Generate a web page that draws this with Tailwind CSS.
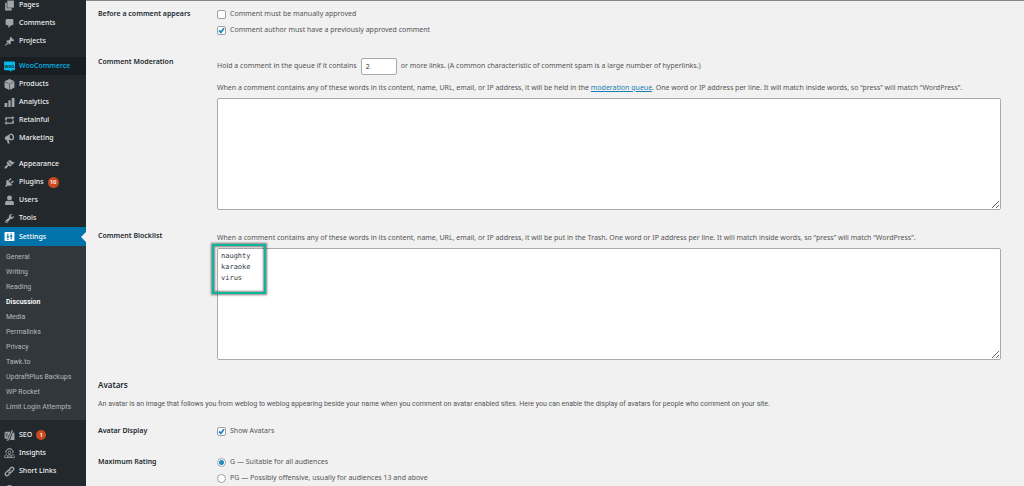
<!DOCTYPE html>
<html lang="en">
<head>
  <meta charset="UTF-8" />
  <meta name="viewport" content="width=device-width, initial-scale=1.0" />
  <title>Discussion Settings - WordPress</title>
  <script src="https://cdn.jsdelivr.net/npm/@tailwindcss/browser@4"></script>
</head>
<body class="h-screen overflow-hidden flex bg-[#f1f1f1] font-['Noto_Sans',sans-serif] text-[7px] leading-[10px] text-[#555]">

  <!-- Admin menu -->
  <nav class="w-[86px] shrink-0 h-screen overflow-hidden flex flex-col justify-start bg-[#23282d] text-[#eee] font-medium">
    <ul class="-mt-1">
      <li><a href="#" class="flex items-center h-[18px] pl-1 gap-1">
        <svg class="size-[11px] fill-[#a0a5aa]" viewBox="0 0 20 20"><path d="M6 1h12v13H6z"/><path d="M2 5h3v10h9v4H2z"/></svg>
        Pages</a></li>
      <li><a href="#" class="flex items-center h-[18px] pl-1 gap-1">
        <svg class="size-[11px] fill-[#a0a5aa]" viewBox="0 0 20 20"><path d="M5 2h10c1.100 0 2 .9 2 2v7c0 1.100-.9 2-2 2h-2l-5 5v-5H5c-1.100 0-2-.9-2-2V4c0-1.100.9-2 2-2z"/></svg>
        Comments</a></li>
      <li><a href="#" class="flex items-center h-[18px] pl-1 gap-1">
        <svg class="size-[11px] fill-[#a0a5aa]" viewBox="0 0 20 20"><path d="M10.440 3.020l1.820-1.820 6.360 6.350-1.830 1.820c-1.050-.68-2.480-.57-3.410.36l-.75.75c-.92.930-1.040 2.350-.35 3.410l-1.830 1.820-2.410-2.410-2.800 2.790c-.42.420-3.380 2.710-3.800 2.290s1.860-3.390 2.280-3.810l2.790-2.790L4.100 9.360l1.830-1.820c1.050.69 2.480.57 3.400-.36l.75-.75c.93-.92 1.050-2.350.36-3.410z"/></svg>
        Projects</a></li>
    </ul>

    <ul class="mt-[7px]">
      <li><a href="#" class="flex items-center h-[18px] pl-1 gap-1 bg-[#191e23] text-[#00b9eb]">
        <svg class="size-[11px] fill-[#00b9eb]" viewBox="0 0 20 20"><path d="M2 1h16c1.100 0 2 .9 2 2v12c0 1.100-.9 2-2 2h-5l1 3-5-3H2c-1.100 0-2-.9-2-2V3c0-1.100.9-2 2-2z"/><text x="10" y="12" text-anchor="middle" font-size="7" font-weight="bold" fill="#191e23">WOO</text></svg>
        WooCommerce</a></li>
      <li><a href="#" class="flex items-center h-[18px] pl-1 gap-1">
        <svg class="size-[11px] fill-[#a0a5aa]" viewBox="0 0 20 20"><path d="M10 0l9 4-9 4-9-4zM1 5.500l8.500 3.800V20L1 15.500zM19 5.500l-8.500 3.800V20l8.500-4.500z"/><path opacity=".7" d="M1 4l9 4 9-4v1.500L10 9.500 1 5.500z"/></svg>
        Products</a></li>
      <li><a href="#" class="flex items-center h-[18px] pl-1 gap-1">
        <svg class="size-[11px] fill-[#a0a5aa]" viewBox="0 0 20 20"><path d="M14 2h5v16h-5zM8 6h4v12H8zM1 11h5v7H1z"/></svg>
        Analytics</a></li>
      <li><a href="#" class="flex items-center h-[18px] pl-1 gap-1">
        <svg class="size-[11px] fill-[#a0a5aa]" viewBox="0 0 20 20"><path d="M4 4h11V2l4 3.500L15 9V6.500H5V10H2V6c0-1.100.9-2 2-2zM16 16H5v2l-4-3.500L5 11v2.500h10V10h3v4c0 1.100-.9 2-2 2z"/></svg>
        Retainful</a></li>
      <li><a href="#" class="flex items-center h-[18px] pl-1 gap-1">
        <svg class="size-[11px] fill-[#a0a5aa]" viewBox="0 0 20 20"><path fill-rule="evenodd" d="M18.150 5.940c.46 1.620.38 3.220-.02 4.480-.42 1.280-1.260 2.180-2.300 2.480-.16.060-.26.060-.4.060-.06.020-.12.020-.18.020-.06.020-.14.020-.22.020h-6.800l2.220 5.500c.020.140-.06.260-.14.340-.08.100-.24.160-.34.160H6.950c-.1 0-.26-.06-.34-.16-.08-.08-.16-.2-.14-.34l-1-5.500H4.250l-.02-.02c-.5.060-1.080-.18-1.540-.62s-.88-1.080-1.060-1.880c-.24-.8-.2-1.560-.02-2.200.18-.62.580-1.080 1.060-1.300l.02-.02 9-5.400c.1-.06.180-.1.240-.16 1.560-1.020 4.900.6 6.220 4.540zM14 10.900c1.400-.3 2.100-2 1.500-4.200s-2.200-3.600-3.500-3.300-2 2-1.400 4.200 2.100 3.600 3.400 3.300z"/></svg>
        Marketing</a></li>
    </ul>

    <ul class="mt-2">
      <li><a href="#" class="flex items-center h-[18px] pl-1 gap-1">
        <svg class="size-[11px] fill-[#a0a5aa]" viewBox="0 0 20 20"><path d="M14.480 11.060L7.410 3.990l1.500-1.500c.5-.56 2.300-.47 3.510.32 1.210.8 1.430 1.280 2.910 2.100 1.180.64 2.450 1.260 4.450.85zm-.71.710L6.700 4.700 4.930 6.470c-.39.390-.39 1.020 0 1.410l1.060 1.060c.39.390.39 1.030 0 1.420-.6.600-1.430 1.110-2.210 1.690-.35.260-.7.530-1.010.840C1.430 14.230.4 16.080 1.400 17.070c.99 1 2.840-.03 4.180-1.360.31-.31.580-.66.850-1.020.57-.78 1.080-1.610 1.690-2.210.39-.39 1.020-.39 1.410 0l1.060 1.060c.39.390 1.020.390 1.410 0z"/></svg>
        Appearance</a></li>
      <li><a href="#" class="flex items-center h-[18px] pl-1 gap-1">
        <svg class="size-[11px] fill-[#a0a5aa]" viewBox="0 0 20 20"><path d="M13.110 4.360L9.870 7.600 8 5.730l3.240-3.240c.35-.34 1.050-.2 1.560.32.520.51.660 1.210.31 1.550zm-8 1.770l.91-1.120 9.010 9.010-1.190.84c-.71.710-2.630 1.160-3.820 1.160H6.140L4.900 17.260c-.59.590-1.540.590-2.120 0-.59-.58-.59-1.530 0-2.120l1.240-1.240v-3.880c0-1.130.4-3.190 1.090-3.890zm7.260 3.970l3.240-3.240c.34-.35 1.040-.21 1.550.31.520.51.660 1.210.31 1.550l-3.240 3.250z"/></svg>
        Plugins
        <span class="flex items-center justify-center h-[11px] min-w-[11px] px-[1px] rounded-full bg-[#ca4a1f] text-white text-[6px] leading-[10px] font-semibold">10</span></a></li>
      <li><a href="#" class="flex items-center h-[18px] pl-1 gap-1">
        <svg class="size-[11px] fill-[#a0a5aa]" viewBox="0 0 20 20"><circle cx="10" cy="5.500" r="4.500"/><path d="M2 18v-4c0-2 2-3.500 5-3.500 1 1 5 1 6 0 3 0 5 1.500 5 3.500v4z"/></svg>
        Users</a></li>
      <li><a href="#" class="flex items-center h-[18px] pl-1 gap-1">
        <svg class="size-[11px] fill-[#a0a5aa]" viewBox="0 0 20 20"><path d="M16.680 9.770c-1.340 1.340-3.300 1.670-4.950.99l-5.410 6.520c-.99.990-2.590.990-3.580 0s-.99-2.590 0-3.570l6.520-5.420c-.68-1.650-.35-3.610.99-4.950 1.280-1.280 3.120-1.620 4.720-1.060l-2.890 2.890 2.820 2.820 2.860-2.870c.53 1.580.18 3.390-1.080 4.650zM3.810 16.210c.4.390 1.040.390 1.430 0 .4-.4.400-1.040 0-1.430-.39-.4-1.030-.4-1.430 0-.39.390-.39 1.030 0 1.430z"/></svg>
        Tools</a></li>
      <li>
        <a href="#" class="relative flex items-center h-[19px] pl-1 gap-1 bg-[#0073aa] text-white">
          <svg class="size-[11px] fill-white" viewBox="0 0 20 20"><path fill-rule="evenodd" d="M2 2h16c.55 0 1 .45 1 1v14c0 .55-.45 1-1 1H2c-.55 0-1-.45-1-1V3c0-.55.45-1 1-1zm4 3v5H4l3 3.500L10 10H8V5zm-.5 9.500v1.500h3v-1.500zM12 15v-5h-2l3-3.500L16 10h-2v5zm-.5-10.500V6h3V4.500z"/></svg>
          Settings
          <span class="absolute right-0 top-[5px] border-y-[5px] border-r-[5px] border-y-transparent border-r-[#f1f1f1]"></span>
        </a>
        <ul class="bg-[#32373c] text-[#b4b9be] pl-[6px] pt-1 pb-[5px] font-normal font-['Roboto',sans-serif] leading-[15px]">
          <li><a href="#">General</a></li>
          <li><a href="#">Writing</a></li>
          <li><a href="#">Reading</a></li>
          <li><a href="#" class="font-semibold text-white">Discussion</a></li>
          <li><a href="#">Media</a></li>
          <li><a href="#">Permalinks</a></li>
          <li><a href="#">Privacy</a></li>
          <li><a href="#">Tawk.to</a></li>
          <li><a href="#">UpdraftPlus Backups</a></li>
          <li><a href="#">WP Rocket</a></li>
          <li><a href="#">Limit Login Attempts</a></li>
        </ul>
      </li>
    </ul>

    <ul class="mt-[6px]">
      <li><a href="#" class="flex items-center h-[18px] pl-1 gap-1">
        <svg class="size-[11px] fill-[#a0a5aa]" viewBox="0 0 20 20"><path d="M4 3h9l-5 13H4c-1.500 0-3-1.200-3-3V6c0-1.800 1.500-3 3-3z"/><path d="M16 4c1.800.3 3 1.300 3 3v11h-8z"/><path d="M4 6l3 7M15 0L9 16c-.6 1.700-1.600 3-4 3" fill="none" stroke="#23282d" stroke-width="4"/><path d="M4.500 6l3 7.500M15.500 0L9 16c-.6 1.700-1.600 2.700-4 2.700" fill="none" stroke="#a0a5aa" stroke-width="2"/></svg>
        SEO
        <span class="flex items-center justify-center h-[10px] min-w-[10px] px-[1px] rounded-full bg-[#ca4a1f] text-white text-[6px] leading-[10px] font-semibold">1</span></a></li>
      <li><a href="#" class="flex items-center h-[18px] pl-1 gap-1">
        <svg class="size-[11px] fill-none stroke-[#a0a5aa]" stroke-width="1.500" viewBox="0 0 20 20"><path d="M4 10a6.500 6.500 0 1 1 12 0M3 6.500C4.500 4 6 2 10 1.500c4 .5 5.500 2.500 7 5M1 17c0-3 1.500-4.500 4-5l2 2M19 17c0-3-1.500-4.500-4-5l-2 2M1 17.500h18"/><circle cx="10" cy="8" r="2.500"/><path d="M6 17c0-3 1.500-5 4-5s4 2 4 5M8 15h4"/></svg>
        Insights</a></li>
      <li><a href="#" class="flex items-center h-[18px] pl-1 gap-1">
        <svg class="size-[11px] fill-none stroke-[#a0a5aa]" stroke-width="2.500" stroke-linecap="round" viewBox="0 0 20 20"><path d="M9 7l3.500-3.800a3 3 0 0 1 4.300 4.300L13 11.300a3 3 0 0 1-4 .2M11 13l-3.500 3.800a3 3 0 0 1-4.300-4.300L7 8.700a3 3 0 0 1 4-.2"/></svg>
        Short Links</a></li>
      <li><a href="#" class="flex items-center h-[18px] pl-1 gap-1">
        <svg class="size-[11px] fill-[#a0a5aa]" viewBox="0 0 20 20"><circle cx="10" cy="10" r="8"/></svg></a></li>
    </ul>
  </nav>

  <!-- Discussion settings form -->
  <main class="grow min-w-0 border-t border-[#82878c] pl-3 pr-[23px] pt-[5px]">
    <form>
      <div class="grid grid-cols-[119px_1fr]">
        <h3 class="font-semibold text-[#23282d] leading-[16px]">Before a comment appears</h3>
        <div>
          <label class="flex items-center h-4 gap-1">
            <input type="checkbox" class="appearance-none size-[9px] rounded-[2px] border border-[#9ca1a6] bg-white" />
            Comment must be manually approved
          </label>
          <label class="flex items-center h-4 gap-1">
            <span class="grid">
              <input type="checkbox" checked class="appearance-none col-start-1 row-start-1 size-[9px] rounded-[2px] border border-[#9ca1a6] bg-white" />
              <svg class="col-start-1 row-start-1 size-[9px] pointer-events-none fill-none stroke-[#1e8cbe]" stroke-width="1.800" viewBox="0 0 9 9"><path d="M2 4.500l1.900 1.900L7 2.200"/></svg>
            </span>
            Comment author must have a previously approved comment
          </label>
        </div>
      </div>

      <div class="grid grid-cols-[119px_1fr] mt-[19px]">
        <h3 class="font-semibold text-[#23282d]"><label for="moderation_keys">Comment Moderation</label></h3>
        <div>
          <p class="flex items-center gap-1 h-[18px]">
            <label for="max_links">Hold a comment in the queue if it contains</label>
            <input type="text" id="max_links" value="2" class="w-9 h-[17px] px-1 rounded-[2px] border border-[#a5abb1] bg-white text-[#32373c]" />
            or more links. (A common characteristic of comment spam is a large number of hyperlinks.)
          </p>
          <p class="mt-2 whitespace-nowrap">When a comment contains any of these words in its content, name, URL, email, or IP address, it will be held in the <a href="#" class="text-[#1a80b3] underline">moderation queue</a>. One word or IP address per line. It will match inside words, so “press” will match “WordPress”.</p>
          <textarea id="moderation_keys" class="block w-full h-28 mt-[5px] px-[3px] py-[2px] rounded-[2px] border border-[#a5abb1] bg-white font-['DejaVu_Sans_Mono',monospace] leading-[11px] text-[#32373c]"></textarea>
        </div>
      </div>

      <div class="grid grid-cols-[119px_1fr] mt-[21px]">
        <h3 class="font-semibold text-[#23282d]"><label for="blocklist_keys">Comment Blocklist</label></h3>
        <div class="pt-[2px]">
          <p class="whitespace-nowrap">When a comment contains any of these words in its content, name, URL, email, or IP address, it will be put in the Trash. One word or IP address per line. It will match inside words, so “press” will match “WordPress”.</p>
          <div class="relative mt-[5px]">
            <textarea id="blocklist_keys" class="block w-full h-28 px-[3px] py-[2px] rounded-[2px] border border-[#a5abb1] bg-white font-['DejaVu_Sans_Mono',monospace] leading-[11px] text-[#32373c]">naughty
karaoke
virus</textarea>
            <!-- highlight round the blocked words -->
            <div class="absolute -left-[5px] -top-1 w-[54px] h-[50px] border-2 border-[#0fb59b] shadow-[0_0_2px_1px_rgba(0,0,0,0.5),inset_0_0_2px_1px_rgba(0,0,0,0.45)] pointer-events-none"></div>
          </div>
        </div>
      </div>

      <h2 class="mt-[19px] text-[8px] leading-3 font-semibold text-[#23282d]">Avatars</h2>
      <p class="mt-2 whitespace-nowrap font-['Roboto',sans-serif]">An avatar is an image that follows you from weblog to weblog appearing beside your name when you comment on avatar enabled sites. Here you can enable the display of avatars for people who comment on your site.</p>

      <div class="grid grid-cols-[119px_1fr] mt-[14px]">
        <h3 class="font-semibold text-[#23282d] leading-[16px]">Avatar Display</h3>
        <label class="flex items-center h-4 gap-1">
          <span class="grid">
            <input type="checkbox" checked class="appearance-none col-start-1 row-start-1 size-[9px] rounded-[2px] border border-[#9ca1a6] bg-white" />
            <svg class="col-start-1 row-start-1 size-[9px] pointer-events-none fill-none stroke-[#1e8cbe]" stroke-width="1.800" viewBox="0 0 9 9"><path d="M2 4.500l1.900 1.900L7 2.200"/></svg>
          </span>
          Show Avatars
        </label>
      </div>

      <div class="grid grid-cols-[119px_1fr] mt-[15px]">
        <h3 class="font-semibold text-[#23282d] leading-[16px]">Maximum Rating</h3>
        <div>
          <label class="flex items-center h-4 gap-1">
            <input type="radio" name="avatar_rating" checked class="appearance-none size-[9px] rounded-full border border-[#9ca1a6] bg-white bg-[radial-gradient(circle,#1e8cbe_2px,white_3px)]" />
            G — Suitable for all audiences
          </label>
          <label class="flex items-center h-4 gap-1">
            <input type="radio" name="avatar_rating" class="appearance-none size-[9px] rounded-full border border-[#9ca1a6] bg-white" />
            PG — Possibly offensive, usually for audiences 13 and above
          </label>
        </div>
      </div>
    </form>
  </main>
</body>
</html>
